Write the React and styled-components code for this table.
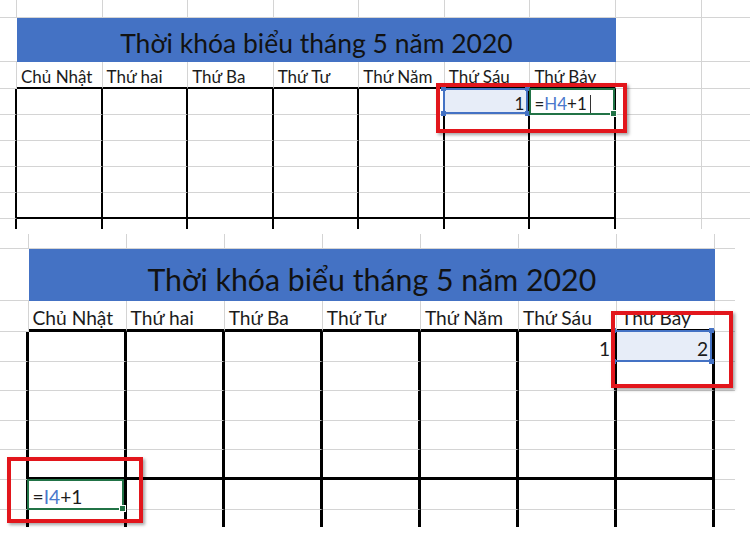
import React from 'react';
import styled, { createGlobalStyle } from 'styled-components';

const GlobalStyle = createGlobalStyle`
  html, body { margin: 0; padding: 0; background: #fff; }
  body { font-family: Lato, "Open Sans", "Noto Sans", sans-serif; color: #1c1c1c; }
`;

const DAYS = ['Chủ Nhật', 'Thứ hai', 'Thứ Ba', 'Thứ Tư', 'Thứ Năm', 'Thứ Sáu', 'Thứ Bảy'];
const TITLE = 'Thời khóa biểu tháng 5 năm 2020';
const GRID = '#d4d4d4';
const BLUE = '#4472c4';
const GREEN = '#217346';

const edge = (kind, t) =>
    kind === 'black' ? `${t}px solid #000` : kind === 'gray' ? `1px solid ${GRID}` : 'none';

const Page = styled.div`
    width: 750px;
    height: 533px;
    overflow: hidden;
    display: flex;
    flex-direction: column;
    gap: 5px;
`;

const SheetBox = styled.div`
    width: ${p => p.$w}px;
    display: flex;
    flex-direction: column;
`;

const Row = styled.div`
    display: grid;
    grid-template-columns: ${p => p.$cols};
    height: ${p => p.$h}px;
`;

const Cell = styled.div`
    position: relative;
    box-sizing: border-box;
    min-width: 0;
    display: flex;
    align-items: flex-end;
    justify-content: ${p => (p.$right ? 'flex-end' : 'flex-start')};
    padding: 0 ${p => p.$pad}px ${p => p.$pb}px;
    border-right: ${p => edge(p.$r, p.$t)};
    border-bottom: ${p => edge(p.$b, p.$t)};
    background: ${p => (p.$fill ? '#e7edf8' : 'transparent')};
    font-size: ${p => p.$fs}px;
    line-height: 1.2;
    white-space: nowrap;
`;

const TitleBand = styled.div`
    grid-column: span 7;
    background: ${BLUE};
    display: flex;
    align-items: flex-end;
    justify-content: center;
    padding-bottom: ${p => p.$pb}px;
    font-size: ${p => p.$fs}px;
    line-height: 1.2;
    color: #121212;
    white-space: nowrap;
`;

const Ref = styled.span`
    color: #4a78cc;
`;

const Caret = styled.span`
    display: inline-block;
    width: 1px;
    height: 19px;
    margin-left: 3px;
    vertical-align: -4px;
    background: #333;
`;

const SelectFrame = styled.div`
    position: absolute;
    inset: ${p => p.$inset};
    border: 2px solid ${BLUE};
    pointer-events: none;
    z-index: 2;
`;

const Handle = styled.span`
    position: absolute;
    width: 5px;
    height: 5px;
    background: ${BLUE};
    ${p => (p.$v === 't' ? 'top: -4px;' : 'bottom: -4px;')}
    ${p => (p.$h === 'l' ? 'left: -4px;' : 'right: -4px;')}
`;

const EditFrame = styled.div`
    position: absolute;
    inset: ${p => p.$inset};
    border: 2px solid ${GREEN};
    pointer-events: none;
    z-index: 2;

    &::after {
        content: '';
        position: absolute;
        right: -4px;
        bottom: -4px;
        width: 5px;
        height: 5px;
        background: ${GREEN};
        border: 1px solid #fff;
    }
`;

const Callout = styled.div`
    position: absolute;
    left: ${p => p.$x}px;
    top: ${p => p.$y}px;
    width: ${p => p.$w}px;
    height: ${p => p.$h}px;
    box-sizing: border-box;
    border: 4px solid #e2161c;
    box-shadow: 2px 2px 3px rgba(0, 0, 0, 0.35);
    pointer-events: none;
    z-index: 5;
`;

const Content = ({ spec }) => (
    <>
        {spec.value}
        {spec.formula && (
            <span>
                ={<Ref>{spec.formula[0]}</Ref>}
                {spec.formula[1]}
                {spec.caret && <Caret />}
            </span>
        )}
        {spec.select && (
            <SelectFrame $inset={spec.select}>
                <Handle $v="t" $h="l" />
                <Handle $v="t" $h="r" />
                <Handle $v="b" $h="l" />
                <Handle $v="b" $h="r" />
            </SelectFrame>
        )}
        {spec.edit && <EditFrame $inset={spec.edit} />}
        {spec.callout && <Callout {...spec.callout} />}
    </>
);

const Sheet = ({ cfg, cells }) => {
    const cols = `${cfg.gutter}px repeat(7, ${cfg.col}px) ${cfg.extra.map(w => w + 'px').join(' ')}`;
    const t = cfg.t;
    const extras = (r, b, key) =>
        cfg.extra.map((_, i) => (
            <Cell key={key + i} $t={t} $r={i === cfg.extra.length - 1 ? 'none' : r} $b={b} />
        ));

    return (
        <SheetBox $w={cfg.width}>
            <Row $cols={cols} $h={cfg.pre}>
                {Array.from({ length: 8 }, (_, i) => (
                    <Cell key={i} $t={t} $r="gray" $b="gray" />
                ))}
                {extras('gray', 'gray', 'p')}
            </Row>
            <Row $cols={cols} $h={cfg.title}>
                <Cell $t={t} $r="none" $b="gray" />
                <TitleBand $fs={cfg.titleSize} $pb={cfg.titlePad}>{TITLE}</TitleBand>
                {extras('gray', 'gray', 't')}
            </Row>
            <Row $cols={cols} $h={cfg.head}>
                <Cell $t={t} $r="gray" $b="gray" />
                {DAYS.map(d => (
                    <Cell key={d} $t={t} $r="gray" $b="black" $pad={cfg.pad} $pb={cfg.headPad} $fs={cfg.size}>
                        {d}
                    </Cell>
                ))}
                {extras('gray', 'gray', 'h')}
            </Row>
            {cfg.body.map((row, ri) => (
                <Row key={ri} $cols={cols} $h={row.h}>
                    <Cell $t={t} $r="black" $b="gray" />
                    {DAYS.map((d, ci) => {
                        const spec = cells[`${ri}-${ci}`];
                        return (
                            <Cell
                                key={d}
                                $t={t}
                                $r="black"
                                $b={row.end ? 'black' : 'gray'}
                                $pad={cfg.pad}
                                $pb={cfg.bodyPad}
                                $fs={cfg.size}
                                $right={spec && spec.value}
                                $fill={spec && spec.select}
                            >
                                {spec && <Content spec={spec} />}
                            </Cell>
                        );
                    })}
                    {extras('gray', 'gray', 'b' + ri)}
                </Row>
            ))}
            <Row $cols={cols} $h={cfg.partial}>
                <Cell $t={t} $r="black" $b="none" />
                {DAYS.map(d => (
                    <Cell key={d} $t={t} $r="black" $b="none" />
                ))}
                {extras('gray', 'none', 'z')}
            </Row>
        </SheetBox>
    );
};

const rows = (n, h, end) => Array.from({ length: n }, (_, i) => ({ h, end: end && i === n - 1 }));

const FIRST = {
    width: 750, gutter: 17, col: 85.57, extra: [85.6, 48.4], t: 2,
    pre: 18, title: 44, head: 27, partial: 10,
    body: rows(5, 26, true),
    titleSize: 26.5, titlePad: 2, size: 17, headPad: 0, bodyPad: 0, pad: 4,
};

const SECOND = {
    width: 735, gutter: 28.5, col: 98.1, extra: [19.8], t: 3,
    pre: 15, title: 52, head: 31, partial: 17.4,
    body: [...rows(5, 29.6, true), ...rows(1, 29.6, false)],
    titleSize: 30.3, titlePad: 4, size: 19.2, headPad: 0, bodyPad: 1, pad: 4,
};

const FIRST_CELLS = {
    '0-5': { value: '1', select: '-1px 0 0 -2px', callout: { $x: -9, $y: -6, $w: 191, $h: 50 } },
    '0-6': { formula: ['H4', '+1'], caret: true, edit: '-1px -1px -1px -1px' },
};

const SECOND_CELLS = {
    '0-5': { value: '1' },
    '0-6': { value: '2', select: '-2px 0 -1px -4px', callout: { $x: -6, $y: -21, $w: 122, $h: 77 } },
    '5-0': { formula: ['I4', '+1'], edit: '-1px 0 -1px -2px', callout: { $x: -21.5, $y: -23, $w: 136, $h: 66 } },
};

export default function App() {
    return (
        <>
            <GlobalStyle />
            <Page>
                <Sheet cfg={FIRST} cells={FIRST_CELLS} />
                <Sheet cfg={SECOND} cells={SECOND_CELLS} />
            </Page>
        </>
    );
}
